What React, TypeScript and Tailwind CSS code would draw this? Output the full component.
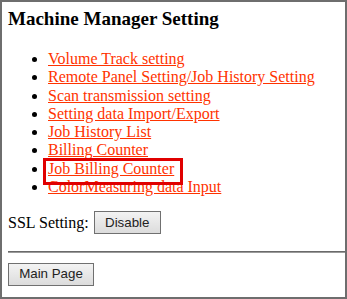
export default function App() {
  const links = [
    'Volume Track setting',
    'Remote Panel Setting/Job History Setting',
    'Scan transmission setting',
    'Setting data Import/Export',
    'Job History List',
    'Billing Counter',
    'Job Billing Counter',
    'ColorMeasuring data Input',
  ]
  const btn = "h-[23px] border border-[#707070] bg-gradient-to-b from-[#f3f3f3] to-[#dcdcdc] text-[13.33px] text-[#222] leading-none px-0"

  return (
    <div className="w-[347px] h-[299px] border-2 border-[#6e6e6e] bg-white overflow-hidden text-black" style={{ fontFamily: '"Liberation Serif", "Times New Roman", serif' }}>
      <div className="pl-[6px] pt-[6px]">
        <h3 className="text-[19px] font-bold leading-[22px]">Machine Manager Setting</h3>
        <ul className="list-disc pl-[40px] mt-[20px] text-[16px] leading-[18.3px]">
          {links.map((l, i) => (
            <li key={i}>
              {l === 'Job Billing Counter' ? (
                <span className="relative inline-block">
                  <a href="#" className="text-[#ff3300] underline">{l}</a>
                  <span className="absolute left-[-5px] right-[-9px] top-[-2px] bottom-[-7px] border-[3px] border-[#e00000]" />
                </span>
              ) : (
                <a href="#" className="text-[#ff3300] underline">{l}</a>
              )}
            </li>
          ))}
        </ul>
        <div className="flex items-center gap-[5px] mt-[15px] text-[16px] leading-[18px]">
          <span>SSL Setting:</span>
          <button className={btn + " w-[67px]"} style={{ fontFamily: '"Liberation Sans", Arial, sans-serif' }}>Disable</button>
        </div>
        <div className="mt-[17px] border-t border-[#6a6a6a] border-b border-b-[#9a9a9a]" />
        <div className="mt-[8px]">
          <button className={btn + " w-[86px]"} style={{ fontFamily: '"Liberation Sans", Arial, sans-serif' }}>Main Page</button>
        </div>
      </div>
    </div>
  )
}
